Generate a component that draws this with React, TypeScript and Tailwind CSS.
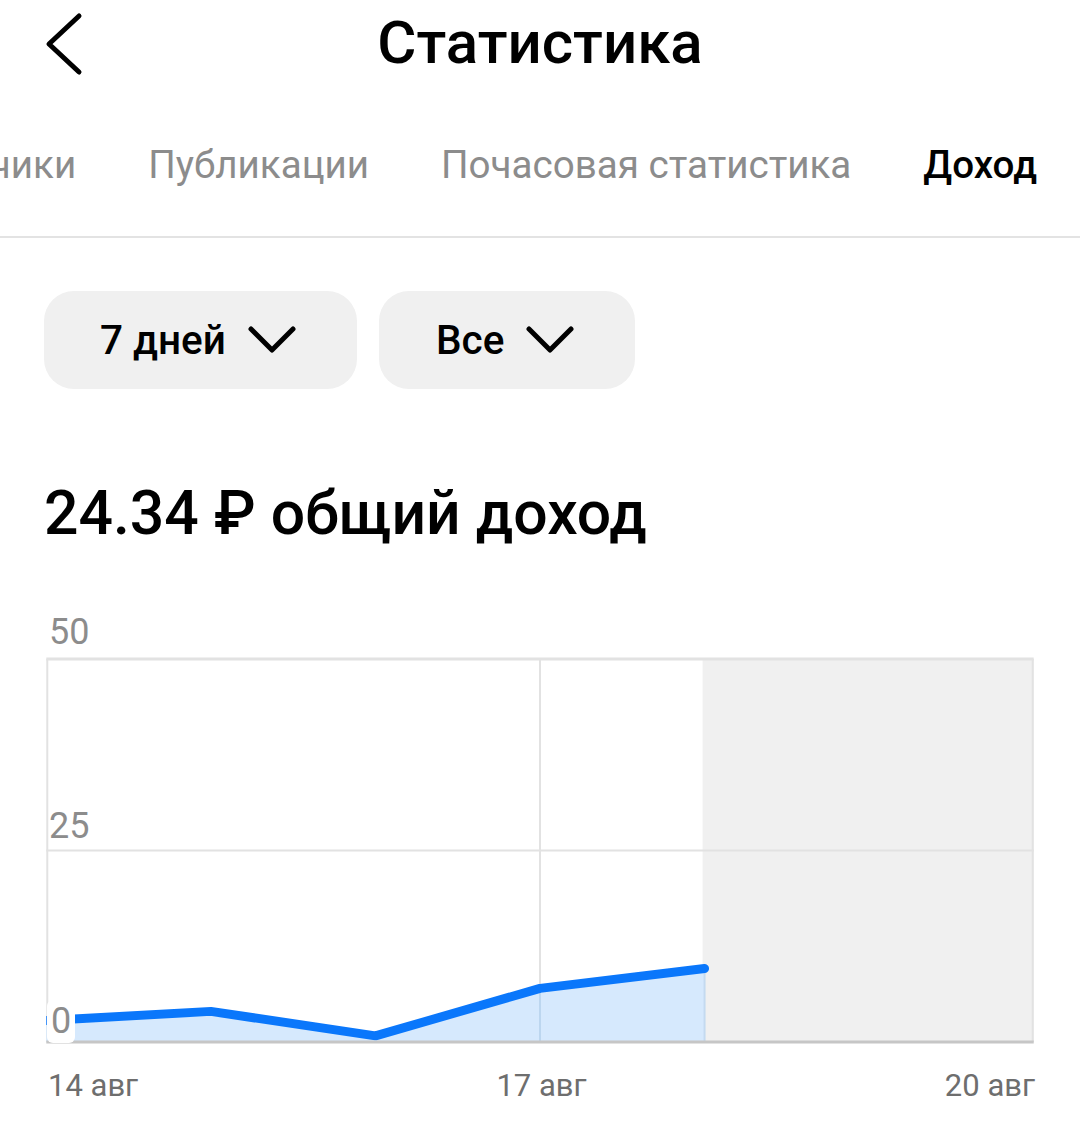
const tabs = ['Подписчики', 'Публикации', 'Почасовая статистика', 'Доход']

// plot area: 990 x 384, values 0..50
const W = 990
const H = 384
const points = [2.8, 4, 0.8, 7, 9.6]

function toXY(v: number, i: number) {
  return [i * (W / 6), H - (v / 50) * H]
}

function Caret() {
  return (
    <svg width={48} height={28} viewBox="0 0 48 28" fill="none">
      <polyline points="3,3 24,24 45,3" stroke="#000" strokeWidth={5} strokeLinecap="round" strokeLinejoin="round" />
    </svg>
  )
}

function Chart() {
  const xy = points.map(toXY)
  const line = xy.map(([x, y]) => `${x},${y}`).join(' ')
  const area = `0,${H} ${line} ${xy[xy.length - 1][0]},${H}`

  return (
    <div className="mx-[45px]">
      <div className="relative mt-[113px] h-[386px]">
        <svg width={W} height={386} viewBox={`0 -1 ${W} 387`} className="block overflow-visible">
          <defs>
            <clipPath id="plot">
              <rect x={0} y={-10} width={W} height={H + 10} />
            </clipPath>
          </defs>
          <rect x={658} y={0} width={W - 658} height={H} fill="#f0f0f0" />
          <line x1={0} y1={0} x2={W} y2={0} stroke="#e2e2e2" strokeWidth={3} />
          <line x1={0} y1={H / 2} x2={W} y2={H / 2} stroke="#e2e2e2" strokeWidth={2} />
          <line x1={1} y1={0} x2={1} y2={H} stroke="#e2e2e2" strokeWidth={2} />
          <line x1={495} y1={0} x2={495} y2={H} stroke="#e2e2e2" strokeWidth={2} />
          <line x1={W - 1} y1={0} x2={W - 1} y2={H} stroke="#e2e2e2" strokeWidth={2} />
          <polygon points={area} fill="#d6e9fd" />
          <line x1={495} y1={xy[3][1]} x2={495} y2={H} stroke="#bcd6ef" strokeWidth={2} />
          <line x1={660} y1={xy[4][1]} x2={660} y2={H} stroke="#c4daf0" strokeWidth={2} />
          <polyline
            points={line}
            fill="none"
            stroke="#0a77fb"
            strokeWidth={9}
            strokeLinejoin="round"
            strokeLinecap="round"
            clipPath="url(#plot)"
          />
          <line x1={0} y1={H} x2={W} y2={H} stroke="#c6c6c6" strokeWidth={3} />
        </svg>
        <span className="absolute left-[4px] top-[-44px] text-[36px] leading-none text-[#8c8c8c]">50</span>
        <span className="absolute left-[4px] top-[150px] text-[36px] leading-none text-[#8c8c8c]">25</span>
        <span className="absolute left-[2px] top-[342px] rounded-md bg-white px-[4px] pb-[4px] pt-[3px] text-[36px] leading-none text-[#8c8c8c]">
          0
        </span>
      </div>
      <div className="mt-[26px] flex justify-between text-[31px] leading-none text-[#6e6e6e]">
        <span className="ml-[3px]">14 авг</span>
        <span>17 авг</span>
        <span>20 авг</span>
      </div>
    </div>
  )
}

export default function App() {
  return (
    <div className="h-[1134px] w-[1080px] overflow-hidden bg-white font-['Roboto',sans-serif] text-black">
      <div className="relative flex h-[86px] items-center justify-center">
        <svg className="absolute left-[44px] top-[12px]" width={42} height={64} viewBox="0 0 42 64" fill="none">
          <polyline points="35,4 5,32 35,60" stroke="#000" strokeWidth={5} strokeLinecap="round" strokeLinejoin="round" />
        </svg>
        <h1 className="text-[60px] font-medium leading-none">Статистика</h1>
      </div>

      <div className="flex h-[152px] items-center justify-end gap-[72px] overflow-hidden border-b-2 border-[#e3e3e3] pr-[43px]">
        {tabs.map((t) => (
          <span
            key={t}
            className={
              t === 'Доход'
                ? 'shrink-0 pt-[8px] text-[38.6px] font-medium leading-none text-black'
                : 'shrink-0 pt-[8px] text-[38.6px] leading-none text-[#8c8c8c]'
            }
          >
            {t}
          </span>
        ))}
      </div>

      <div className="mt-[53px] flex gap-[22px] px-[44px]">
        <button className="flex h-[98px] w-[313px] items-center gap-[22px] rounded-[30px] bg-[#f0f0f0] pl-[56px] text-[40.5px] font-medium leading-none">
          7 дней
          <Caret />
        </button>
        <button className="flex h-[98px] w-[256px] items-center gap-[22px] rounded-[30px] bg-[#f0f0f0] pl-[57px] text-[40.5px] font-medium leading-none">
          Все
          <Caret />
        </button>
      </div>

      <h2 className="mt-[95px] pl-[44px] text-[60.7px] font-medium leading-none">24.34 ₽ общий доход</h2>

      <Chart />
    </div>
  )
}
